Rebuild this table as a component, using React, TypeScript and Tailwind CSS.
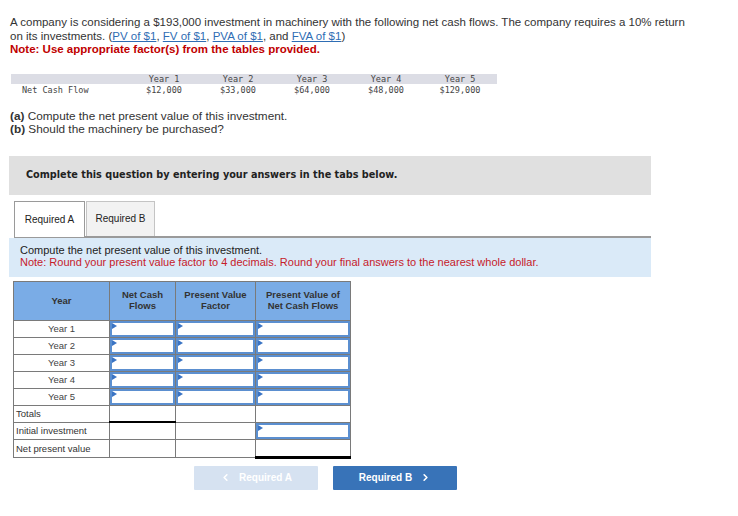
import React from "react";
import { ChevronLeft, ChevronRight } from "lucide-react";

const years = ["Year 1", "Year 2", "Year 3", "Year 4", "Year 5"];
const flows = ["$12,000", "$33,000", "$64,000", "$48,000", "$129,000"];

function InputCell({ className = "" }: { className?: string }) {
  return (
    <td className={`border border-[#7a7a7a] p-0 h-[17px] ${className}`}>
      <div className="relative h-[16px] border-2 border-[#5b8fd0] bg-white">
        <span className="absolute left-0 top-0 w-0 h-0 border-y-[3px] border-y-transparent border-l-[5px] border-l-[#3a74c4]" />
      </div>
    </td>
  );
}

export default function App() {
  return (
    <div className="w-[738px] h-[516px] bg-white text-[#333] font-['Liberation_Sans',Arial,sans-serif] relative">
      <div className="pt-[16px] px-[10px] w-[700px] text-[11.5px] leading-[13.5px]">
        <p>
          A company is considering a $193,000 investment in machinery with the following net cash flows. The company requires a 10% return
          on its investments. (<a className="text-[#2e6db4] underline">PV of $1</a>, <a className="text-[#2e6db4] underline">FV of $1</a>, <a className="text-[#2e6db4] underline">PVA of $1</a>, and <a className="text-[#2e6db4] underline">FVA of $1</a>)
        </p>
        <p className="font-bold text-[#c00000]">Note: Use appropriate factor(s) from the tables provided.</p>
      </div>

      {/* cash flow table */}
      <div className="mt-[17px] ml-[11px] w-[486px] font-['DejaVu_Sans_Mono',monospace] text-[8.5px] leading-[10px] text-[#444]">
        <div className="grid grid-cols-[116px_74px_74px_74px_74px_74px] bg-[#dcdde5] h-[10px] items-end">
          <span />
          <span className="text-center">Year 1</span>
          <span className="text-center">Year 2</span>
          <span className="text-center">Year 3</span>
          <span className="text-center">Year 4</span>
          <span className="text-center">Year 5</span>
        </div>
        <div className="grid grid-cols-[116px_74px_74px_74px_74px_74px] pt-[1px]">
          <span className="pl-[11px]">Net Cash Flow</span>
          {flows.map((f) => (
            <span key={f} className="text-center">{f}</span>
          ))}
        </div>
      </div>

      <div className="mt-[15px] px-[10px] text-[11.8px] leading-[13px]">
        <p><span className="font-bold">(a)</span> Compute the net present value of this investment.</p>
        <p><span className="font-bold">(b)</span> Should the machinery be purchased?</p>
      </div>

      <div className="mt-[20px] ml-[9px] w-[642px] h-[39px] bg-[#e0e0e0] flex items-center pl-[17px] font-['DejaVu_Sans',Verdana,sans-serif] text-[9.7px] font-bold text-[#222]">
        Complete this question by entering your answers in the tabs below.
      </div>

      {/* tabs */}
      <div className="mt-[6px] ml-[14px] w-[637px] flex gap-[1px] border-b-2 border-[#9a9a9a] text-[10px] text-[#222] whitespace-nowrap">
        <div className="w-[71px] h-[36px] -mb-[2px] border border-[#9a9a9a] border-b-0 bg-white flex items-center justify-center">Required A</div>
        <div className="w-[69px] h-[35px] border border-[#c4c4c4] border-b-0 bg-[#f2f2f2] flex items-center justify-center">Required B</div>
      </div>
      <div className="ml-[9px] w-[642px] h-[39px] bg-[#daeaf8] pl-[11px] pt-[6px] text-[11px] leading-[12px]">
        <p className="text-[#222]">Compute the net present value of this investment.</p>
        <p className="text-[#c6202a]">Note: Round your present value factor to 4 decimals. Round your final answers to the nearest whole dollar.</p>
      </div>

      {/* NPV table */}
      <table className="mt-[4px] ml-[13px] border-collapse text-[9.5px] leading-[11px] text-[#333]">
        <colgroup>
          <col className="w-[96px]" />
          <col className="w-[66px]" />
          <col className="w-[80px]" />
          <col className="w-[95px]" />
        </colgroup>
        <thead>
          <tr className="bg-[#7aace6] h-[39px] font-bold text-[#333]">
            <th className="border border-[#7a7a7a] font-bold">Year</th>
            <th className="border border-[#7a7a7a] font-bold align-top pt-[7px]">Net Cash<br />Flows</th>
            <th className="border border-[#7a7a7a] font-bold align-top pt-[7px]">Present Value<br />Factor</th>
            <th className="border border-[#7a7a7a] font-bold align-top pt-[7px]">Present Value of<br />Net Cash Flows</th>
          </tr>
        </thead>
        <tbody>
          {years.map((y) => (
            <tr key={y}>
              <td className="border border-[#7a7a7a] text-center h-[17px] text-[#444]">{y}</td>
              <InputCell />
              <InputCell />
              <InputCell />
            </tr>
          ))}
          <tr>
            <td className="border border-[#7a7a7a] pl-[2px] h-[17px]">Totals</td>
            <td className="border border-[#7a7a7a] border-b-2 border-b-black" />
            <td className="border border-[#7a7a7a]" />
            <td className="border border-[#7a7a7a] border-t-black" />
          </tr>
          <tr>
            <td className="border border-[#7a7a7a] pl-[2px] h-[17px]">Initial investment</td>
            <td className="border border-[#7a7a7a] border-t-black" />
            <td className="border border-[#7a7a7a]" />
            <InputCell />
          </tr>
          <tr>
            <td className="border border-[#7a7a7a] pl-[2px] h-[18px]">Net present value</td>
            <td className="border border-[#7a7a7a]" />
            <td className="border border-[#7a7a7a]" />
            <td className="border border-[#7a7a7a] border-b-[3px] border-b-black" />
          </tr>
        </tbody>
      </table>

      {/* nav buttons */}
      <div className="mt-[7px] ml-[194px] flex gap-[15px] text-[10px] font-bold text-white">
        <div className="w-[124px] h-[24px] bg-[#d6e2f1] rounded-[1px] flex items-center justify-center gap-[8px]">
          <ChevronLeft size={11} strokeWidth={3.5} />
          <span>Required A</span>
        </div>
        <div className="w-[124px] h-[24px] bg-[#3873b8] rounded-[1px] flex items-center justify-center gap-[8px]">
          <span>Required B</span>
          <ChevronRight size={11} strokeWidth={3.5} />
        </div>
      </div>
    </div>
  );
}
